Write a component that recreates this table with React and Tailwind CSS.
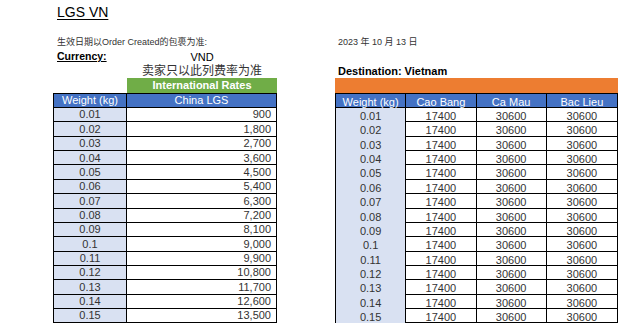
import React from "react";

const leftVals = ["900","1,800","2,700","3,600","4,500","5,400","6,300","7,200","8,100","9,000","9,900","10,800","11,700","12,600","13,500"];
const weights = ["0.01","0.02","0.03","0.04","0.05","0.06","0.07","0.08","0.09","0.1","0.11","0.12","0.13","0.14","0.15"];

const font = { fontFamily: '"Liberation Sans", Arial, "Noto Sans CJK SC", sans-serif' };

export default function App() {
  return (
    <div className="w-[618px] h-[323px] overflow-hidden bg-white text-[#222]" style={font}>
      <div className="flex">
        {/* Left block */}
        <div className="ml-[53px] w-[224px] flex flex-col">
          <div className="h-[36px] pl-[4px]">
            <span className="text-[14px] leading-[20px] underline underline-offset-2 text-black">LGS VN</span>
          </div>
          <div className="h-[14px] pl-[4px] flex items-center text-[9px] text-[#333] whitespace-nowrap">
            生效日期以Order Created的包裹为准:
          </div>
          <div className="h-[14px] flex items-center">
            <div className="w-[74px] pl-[4px] text-[10.5px] font-bold underline text-black">Currency:</div>
            <div className="flex-1 text-center text-[11px] text-black">VND</div>
          </div>
          <div className="h-[14px] flex items-center">
            <div className="w-[74px]" />
            <div className="flex-1 text-center text-[12px] leading-[14px] text-[#333]">卖家只以此列费率为准</div>
          </div>
          <div className="h-[15px] flex">
            <div className="w-[74px]" />
            <div className="flex-1 bg-[#70AD47] text-white font-bold text-[11px] flex items-center justify-center">International Rates</div>
          </div>
          <div className="border-t border-x border-black">
            <div className="h-[14px] flex border-b border-black bg-[#4472C4] text-white text-[11px]">
              <div className="w-[73px] border-r border-black flex items-center justify-center">Weight (kg)</div>
              <div className="flex-1 flex items-center justify-center">China LGS</div>
            </div>
            {weights.map((w, i) => (
              <div key={w} className="h-[14.36px] flex border-b border-black text-[11px] text-[#333]">
                <div className="w-[73px] border-r border-black bg-[#D9E1F2] flex items-center justify-center">{w}</div>
                <div className="flex-1 flex items-center justify-end pr-[5px]">{leftVals[i]}</div>
              </div>
            ))}
          </div>
        </div>

        {/* Right block */}
        <div className="ml-[58px] w-[283px] flex flex-col">
          <div className="h-[36px]" />
          <div className="h-[14px] pl-[3px] flex items-center text-[9px] text-[#333] whitespace-nowrap">2023 年 10 月 13 日</div>
          <div className="h-[14px]" />
          <div className="h-[14px] pl-[3px] flex items-center text-[11px] font-bold text-black">Destination: Vietnam</div>
          <div className="h-[15px] bg-[#ED7D31]" />
          <div className="border-t border-x border-black">
            <div className="h-[14px] grid grid-cols-4 border-b border-black bg-[#4472C4] text-white text-[11px]">
              <div className="border-r border-black flex items-center justify-center">Weight (kg)</div>
              <div className="border-r border-black flex items-center justify-center">Cao Bang</div>
              <div className="border-r border-black flex items-center justify-center">Ca Mau</div>
              <div className="flex items-center justify-center">Bac Lieu</div>
            </div>
            {weights.map((w) => (
              <div key={w} className="h-[14.36px] grid grid-cols-4 border-b border-black text-[11px] text-[#333]">
                <div className="border-r border-black bg-[#D9E1F2] flex items-center justify-center">{w}</div>
                <div className="border-r border-black flex items-center justify-center">17400</div>
                <div className="border-r border-black flex items-center justify-center">30600</div>
                <div className="flex items-center justify-center">30600</div>
              </div>
            ))}
          </div>
        </div>
      </div>
    </div>
  );
}
